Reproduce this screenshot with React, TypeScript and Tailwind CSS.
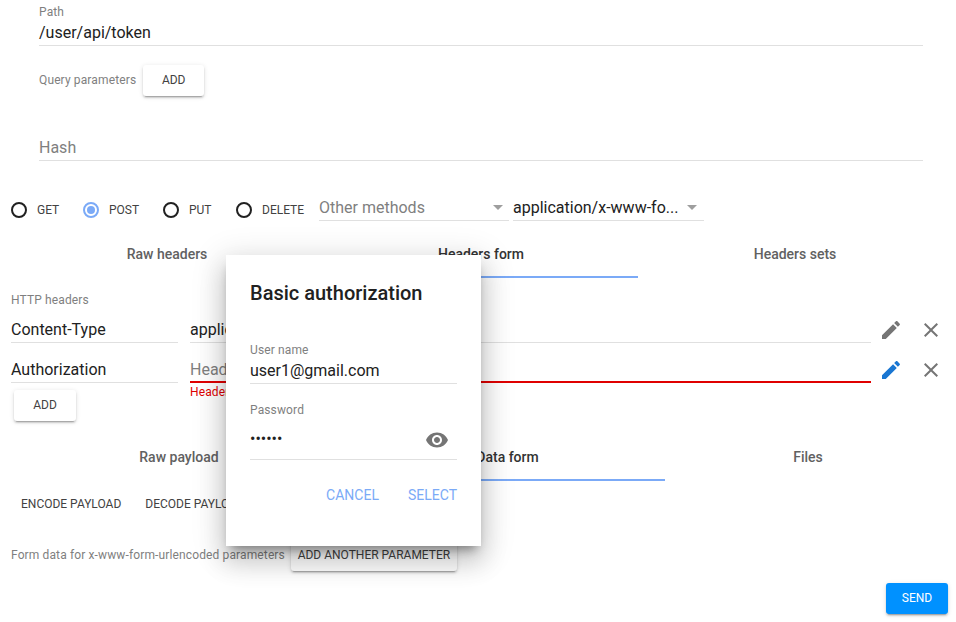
const EDIT = 'M3 17.25V21h3.75L17.81 9.94l-3.75-3.75L3 17.25zM20.71 7.04c.39-.39.39-1.02 0-1.41l-2.34-2.34c-.39-.39-1.02-.39-1.41 0l-1.83 1.83 3.75 3.75 1.83-1.83z';
const CLOSE = 'M19 6.41L17.59 5 12 10.59 6.41 5 5 6.41 10.59 12 5 17.59 6.41 19 12 13.41 17.59 19 19 17.59 13.41 12 19 6.41z';
const EYE = 'M12 4.5C7 4.5 2.73 7.61 1 12c1.73 4.39 6 7.5 11 7.5s9.27-3.11 11-7.5c-1.73-4.39-6-7.5-11-7.5zM12 17c-2.76 0-5-2.24-5-5s2.24-5 5-5 5 2.24 5 5-2.24 5-5 5zm0-8c-1.66 0-3 1.34-3 3s1.34 3 3 3 3-1.34 3-3-1.34-3-3-3z';

const raised = 'shadow-[0_2px_2px_0_rgba(0,0,0,0.14),0_1px_5px_0_rgba(0,0,0,0.12),0_3px_1px_-2px_rgba(0,0,0,0.2)]';

function Icon({ d, className }: { d: string; className: string }) {
  return (
    <svg viewBox="0 0 24 24" width="24" height="24" fill="currentColor" className={className}>
      <path d={d} />
    </svg>
  );
}

function Radio({ label, checked, className }: { label: string; checked?: boolean; className: string }) {
  return (
    <div className={`flex items-center ${className}`}>
      <span
        className={`flex h-4 w-4 shrink-0 items-center justify-center rounded-full border-2 ${
          checked ? 'border-[#7baaf7]' : 'border-[#212121]'
        }`}
      >
        {checked && <span className="h-2 w-2 rounded-full bg-[#7baaf7]" />}
      </span>
      <span className="ml-[10px] text-xs text-[#424242]">{label}</span>
    </div>
  );
}

function Arrow({ className }: { className: string }) {
  return (
    <span className={`h-0 w-0 border-x-[5px] border-t-[5px] border-x-transparent border-t-[#9e9e9e] ${className}`} />
  );
}

function Tab({ label, active, className }: { label: string; active?: boolean; className: string }) {
  return (
    <div
      className={`flex h-12 items-center justify-center border-b-2 pt-[2px] text-sm font-medium ${
        active ? 'border-[#7baaf7] text-[#333333]' : 'border-transparent text-[#616161]'
      } ${className}`}
    >
      {label}
    </div>
  );
}

function HeaderRow({ name, children, iconColor }: { name: string; children: React.ReactNode; iconColor: string }) {
  return (
    <div className="ml-[11px] flex">
      <div className="h-[25px] w-[167px] border-b border-[#e0e0e0] text-base leading-6 text-[#212121]">{name}</div>
      {children}
      <Icon d={EDIT} className={`ml-2 h-6 w-6 ${iconColor}`} />
      <Icon d={CLOSE} className="ml-4 h-6 w-6 text-[#757575]" />
    </div>
  );
}

export default function App() {
  return (
    <div className="relative h-[622px] w-[956px] overflow-hidden bg-white font-['Roboto',sans-serif]">
      <div className="ml-[39px] w-[884px] border-b border-[#e0e0e0] pt-[5px]">
        <div className="mb-[1px] text-xs leading-[15px] tracking-[0.13px] text-[#7f7f7f]">Path</div>
        <div className="text-base leading-6 text-[#212121]">/user/api/token</div>
      </div>

      <div className="mt-[19px] ml-[39px] flex h-[31px] items-center">
        <span className="pb-[2px] text-xs tracking-[0.13px] text-[#7f7f7f]">Query parameters</span>
        <button className={`ml-[7px] h-[31px] w-[61px] rounded-[3px] bg-white pb-[2px] text-xs text-[#424242] ${raised}`}>ADD</button>
      </div>

      <div className="mt-[40px] ml-[39px] w-[884px] border-b border-[#e0e0e0] text-base leading-6 text-[#7f7f7f]">Hash</div>

      <div className="mt-[34px] flex h-[26px] items-start">
        <Radio label="GET" className="mt-[7px] ml-[11px] w-[72px]" />
        <Radio label="POST" checked className="mt-[7px] w-[80px]" />
        <Radio label="PUT" className="mt-[7px] w-[73px]" />
        <Radio label="DELETE" className="mt-[7px] w-[83px]" />
        <div className="flex h-[26px] w-[190px] items-center border-b border-[#e0e0e0] text-base text-[#7f7f7f]">
          <span className="flex-1">Other methods</span>
          <Arrow className="mr-[6px]" />
        </div>
        <div className="ml-1 flex h-[26px] w-[191px] items-center border-b border-[#e0e0e0] text-base text-[#212121]">
          <span className="flex-1">application/x-www-fo...</span>
          <Arrow className="mr-[7px]" />
        </div>
      </div>

      <div className="mt-[9px] ml-[10px] flex">
        <Tab label="Raw headers" className="w-[314px]" />
        <Tab label="Headers form" active className="w-[314px]" />
        <Tab label="Headers sets" className="w-[314px]" />
      </div>

      <div className="mt-[15px] ml-[11px] text-xs leading-[14px] tracking-[0.13px] text-[#7f7f7f]">HTTP headers</div>

      <div className="mt-[11px]">
        <HeaderRow name="Content-Type" iconColor="text-[#757575]">
          <div className="ml-3 h-[25px] w-[681px] border-b border-[#e0e0e0] text-base leading-6 text-[#212121]">application/x-www-form-urlencoded</div>
        </HeaderRow>
      </div>
      <div className="mt-[15px]">
        <HeaderRow name="Authorization" iconColor="text-[#1976d2]">
          <div className="relative ml-3 h-[25px] w-[681px] border-b-2 border-[#e00000] text-base leading-6 text-[#7f7f7f]">
            Header value
            <span className="absolute top-[27px] left-0 text-xs leading-[14px] tracking-[0.13px] text-[#e00000]">Header value is required</span>
          </div>
        </HeaderRow>
      </div>

      <button className={`mt-[7px] ml-[14px] block h-[31px] w-[62px] rounded-[3px] bg-white pb-[2px] text-xs text-[#424242] ${raised}`}>ADD</button>

      <div className="mt-3 ml-[8px] flex">
        <Tab label="Raw payload" className="w-[342px]" />
        <Tab label="Data form" active className="w-[315px]" />
        <Tab label="Files" className="w-[286px]" />
      </div>

      <div className="mt-[5px] ml-[13px] flex h-9 items-center gap-2 text-xs text-[#424242]">
        <button className="px-2">ENCODE PAYLOAD</button>
        <button className="px-2">DECODE PAYLOAD</button>
      </div>

      <div className="mt-[18px] ml-[11px] flex h-[31px] items-center">
        <span className="pb-[2px] text-xs tracking-[0.13px] text-[#7f7f7f]">Form data for x-www-form-urlencoded parameters</span>
        <button className={`ml-[6px] h-[31px] w-[166px] rounded-[3px] bg-white pb-[2px] text-xs text-[#424242] ${raised}`}>ADD ANOTHER PARAMETER</button>
      </div>

      <div className="mt-[12px] mr-2 flex justify-end">
        <button className={`h-[31px] w-[62px] rounded-[3px] bg-[#0091ff] pb-[2px] text-xs text-white ${raised}`}>SEND</button>
      </div>

      <div className="absolute top-[255px] left-[226px] h-[291px] w-[255px] bg-white px-6 pt-6 shadow-[0_16px_24px_2px_rgba(0,0,0,0.14),0_6px_30px_5px_rgba(0,0,0,0.12),0_8px_10px_-5px_rgba(0,0,0,0.4)]">
        <h2 className="text-xl leading-7 font-medium text-[#212121]">Basic authorization</h2>
        <div className="mt-[36px] border-b border-[#e0e0e0]">
          <div className="mb-[1px] text-xs leading-[15px] tracking-[0.13px] text-[#7f7f7f]">User name</div>
          <div className="text-base leading-6 text-[#212121]">user1@gmail.com</div>
        </div>
        <div className="mt-[19px] flex h-[57px] flex-col border-b border-[#e0e0e0]">
          <div className="mb-[1px] text-xs leading-[14px] tracking-[0.13px] text-[#7f7f7f]">Password</div>
          <div className="flex flex-1 items-center justify-between pr-2">
            <span className="text-base text-[#212121]">••••••</span>
            <Icon d={EYE} className="mt-[2px] h-6 w-6 text-[#757575]" />
          </div>
        </div>
        <div className="mt-[25px] flex justify-end gap-[29px] text-sm text-[#7baaf7]">
          <button>CANCEL</button>
          <button>SELECT</button>
        </div>
      </div>
    </div>
  );
}
